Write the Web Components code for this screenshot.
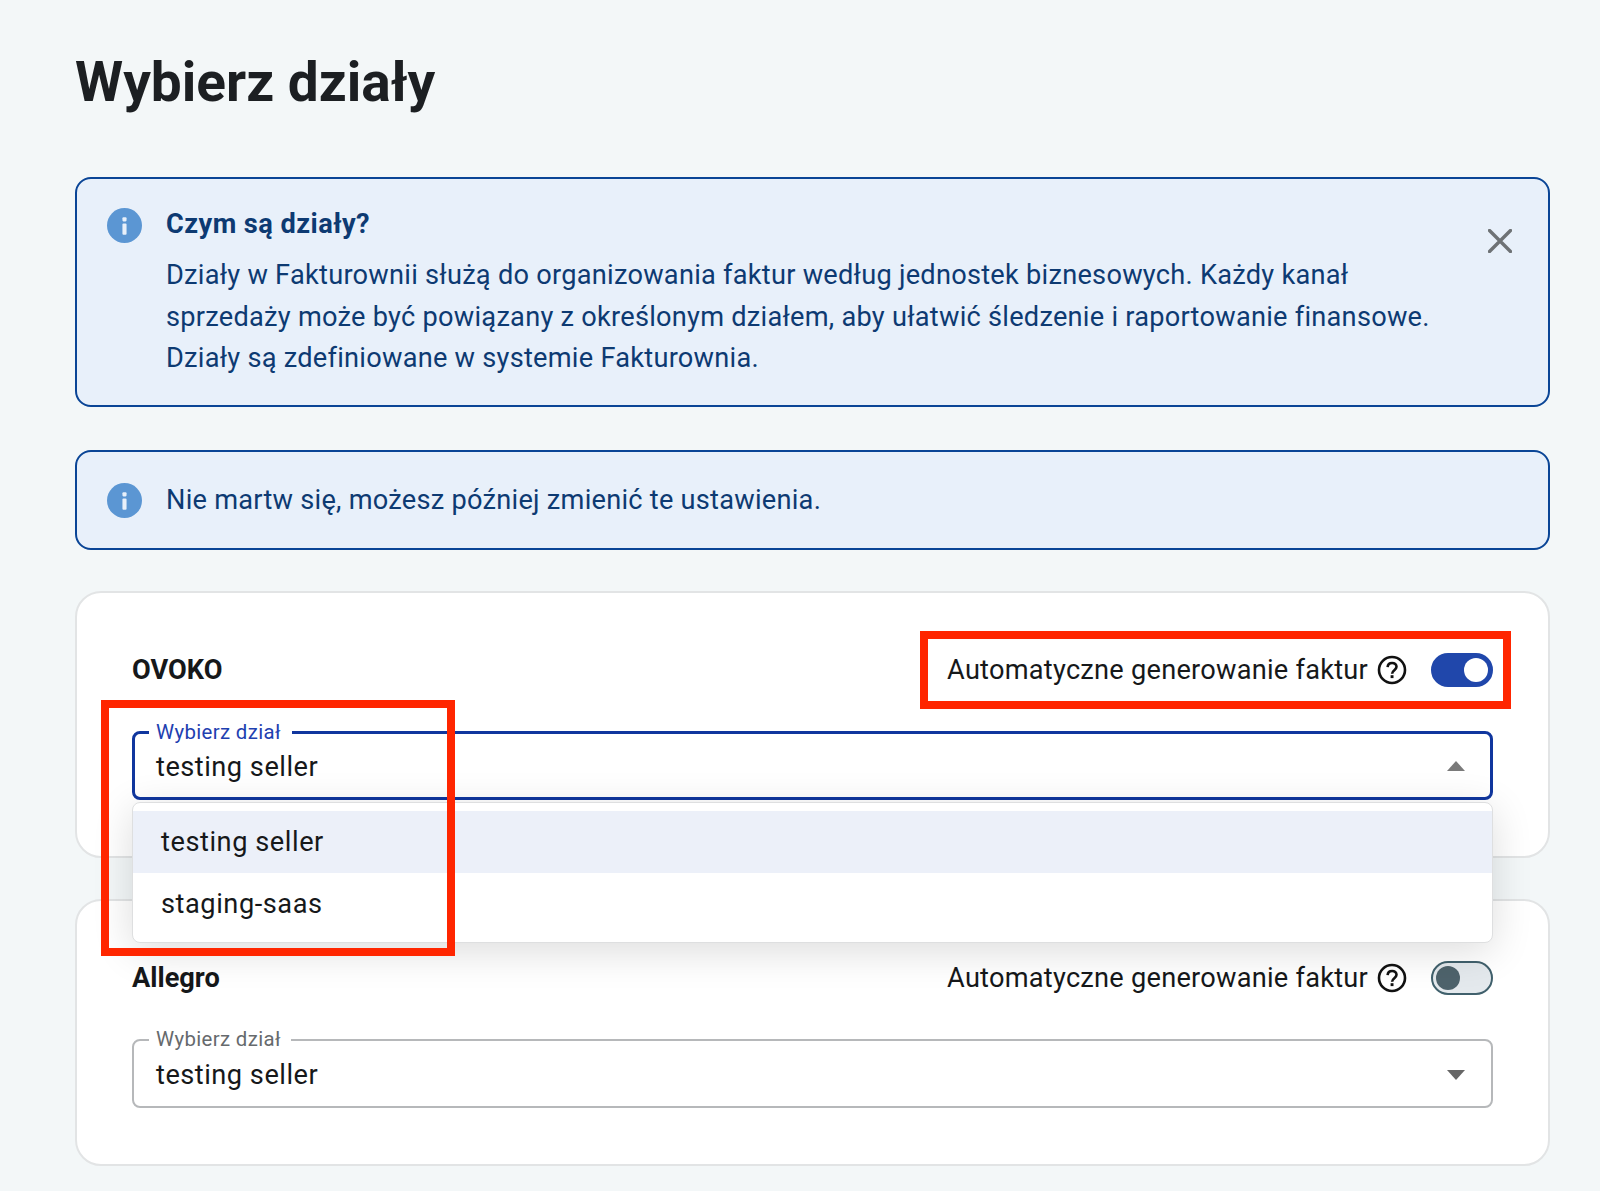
<!DOCTYPE html>
<html lang="pl"><head><meta charset="utf-8"><title>Wybierz działy</title>
<style>
html,body{margin:0;padding:0;background:#f3f7f8;font-family:Roboto,"Liberation Sans",sans-serif;}
</style></head><body>
<app-page>
  <info-alert heading="Czym są działy?" closable>Działy w Fakturownii służą do organizowania faktur według jednostek biznesowych. Każdy kanał<br>sprzedaży może być powiązany z określonym działem, aby ułatwić śledzenie i raportowanie finansowe.<br>Działy są zdefiniowane w systemie Fakturownia.</info-alert>
  <info-alert compact>Nie martw się, możesz później zmienić te ustawienia.</info-alert>
  <channel-card name="OVOKO" on open></channel-card>
  <channel-card name="Allegro"></channel-card>
</app-page>
<script>
function def(name, css, html, init){
  customElements.define(name, class extends HTMLElement{
    connectedCallback(){
      if(this.shadowRoot) return;
      const r=this.attachShadow({mode:'open'});
      r.innerHTML='<style>'+css+'</style>'+(typeof html==='function'?html(this):html);
      if(init) init(this,r);
    }
  });
}
def('app-page',`
:host{display:block;position:relative;box-sizing:border-box;width:1600px;height:1191px;overflow:hidden;padding:0 50px 0 75px;color:#1b1d1f}
h1{margin:0;padding-top:48px;height:177px;box-sizing:border-box;font:700 55px/68px Roboto,sans-serif;color:#1c1f22;letter-spacing:0}
.col{display:flex;flex-direction:column}
::slotted(info-alert){margin-bottom:43px}
::slotted(info-alert[compact]){margin-bottom:41px}
::slotted(channel-card){margin-bottom:41px}
.mark{position:absolute;border:8px solid #ff2600;box-sizing:border-box;pointer-events:none;z-index:5}
.m1{left:920px;top:631px;width:591px;height:78px}
.m2{left:101px;top:700px;width:354px;height:256px}
`,`<h1>Wybierz działy</h1><div class="col"><slot></slot></div><div class="mark m1"></div><div class="mark m2"></div>`);

def('info-icon',`:host{display:block;width:35px;height:35px;flex:none}svg{display:block}`,
`<svg width="35" height="35" viewBox="0 0 34 34"><circle cx="17" cy="17" r="17" fill="#5b96d3"/><rect x="15" y="15" width="4" height="11" rx="1" fill="#e8f0fa"/><rect x="15" y="9" width="4" height="4" rx="1" fill="#e8f0fa"/></svg>`);

def('info-alert',`
:host{display:block;box-sizing:border-box;background:#e8f0fa;border:2px solid #0a4596;border-radius:16px;color:#0d3a72;font:400 27.2px/41.6px Roboto,sans-serif;letter-spacing:.25px;position:relative}
.wrap{display:flex;gap:24px;padding:29px 110px 25px 30px}
:host([compact]) .wrap{padding:28px 30px 27px 30px;align-items:center}
.t{font-weight:700;line-height:32px;margin:0 0 15px;letter-spacing:.45px;color:#0d3a72}
.body{flex:1;white-space:nowrap}
button{position:absolute;right:36.5px;top:50px;width:24px;height:24px;padding:0;border:0;background:none;display:block}
svg{display:block}
`,(h)=>`<div class="wrap"><info-icon></info-icon><div class="body">${h.hasAttribute('heading')?`<div class="t">${h.getAttribute('heading')}</div>`:''}<slot></slot></div>${h.hasAttribute('closable')?`<button aria-label="Zamknij"><svg width="24" height="24" viewBox="0 0 24 24"><path d="M1.5 1.5L22.5 22.5M22.5 1.5L1.5 22.5" stroke="#6e7275" stroke-width="3.4" stroke-linecap="round" fill="none"/></svg></button>`:''}</div>`);

def('toggle-switch',`
:host{display:block;width:62px;height:34px;box-sizing:border-box;border-radius:17px;flex:none;position:relative;background:#e4e9ed;border:2px solid #40606c}
:host([on]){background:#2047ab;border-color:#2047ab}
i{position:absolute;top:3px;left:3px;width:24px;height:24px;border-radius:50%;background:#4e636c}
:host([on]) i{left:auto;right:3px;background:#fff}
`,`<i></i>`);

def('help-icon',`:host{display:block;width:30px;height:30px;flex:none}svg{display:block}`,
`<svg width="30" height="30" viewBox="0 0 30 30" fill="none"><circle cx="15" cy="15" r="13" stroke="#111" stroke-width="2.6"/><path d="M10.6 12.1c.2-2.6 2-4.1 4.5-4.1 2.6 0 4.4 1.6 4.4 3.8 0 3.4-4.4 3.4-4.4 6.9" stroke="#111" stroke-width="2.6"/><rect x="13.6" y="20.2" width="2.9" height="2.9" fill="#111"/></svg>`);

def('select-field',`
:host{display:block;position:relative;height:68px;font:400 27.2px/36px Roboto,sans-serif;color:#16181a}
fieldset{position:absolute;inset:-12px 0 0 0;margin:0;padding:0 0 0 15px;border:2px solid #b6b8ba;border-radius:8px;box-sizing:border-box}
:host([open]) fieldset{border-color:#10369e;border-width:3px;inset:-11.5px 0 0 0;padding-left:14px}
legend{padding:0 10px 0 7px;font:400 20.4px/22px Roboto,sans-serif;color:#666a6d;height:24px;margin-top:0;letter-spacing:.35px}
:host([open]) legend{padding-right:11px;color:#1e40b0}
.v{position:absolute;left:24px;top:17px;letter-spacing:.5px}
.a{position:absolute;right:28px;top:30px;width:0;height:0;border-left:9px solid transparent;border-right:9px solid transparent;border-top:10px solid #666}
:host([open]) .a{top:29px;border-top:0;border-bottom:10px solid #7a7a7a}
.menu{position:absolute;left:0;right:0;top:70px;background:#fff;border:1px solid #dedfe0;border-radius:8px;padding:8px 0 0;height:141px;box-sizing:border-box;box-shadow:0 8px 40px rgba(0,0,0,.14);letter-spacing:.55px;z-index:3}
.o{height:62px;display:flex;align-items:center;padding-left:28px}
.o.s{background:#ecf0f9}
`,(h)=>`<fieldset><legend>Wybierz dział</legend></fieldset><div class="v">testing seller</div><div class="a"></div>${h.hasAttribute('open')?`<div class="menu"><div class="o s">testing seller</div><div class="o">staging-saas</div></div>`:''}`);

def('channel-card',`
:host{display:block;box-sizing:border-box;height:267px;background:#fff;border:2px solid #e2e4e5;border-radius:26px;padding:0 55px;position:relative}
:host([open]){z-index:2}
.row{display:flex;align-items:center;justify-content:space-between;height:70px;margin-top:42px;margin-bottom:27px}
b{font:700 27.2px/34px Roboto,sans-serif;color:#16181a}
.r{display:flex;align-items:center;font:400 27.2px/34px Roboto,sans-serif;letter-spacing:.24px;color:#16181a}
help-icon{margin-left:9px;margin-right:24px}
`,(h)=>`<div class="row"><b>${h.getAttribute('name')}</b><div class="r">Automatyczne generowanie faktur<help-icon></help-icon><toggle-switch ${h.hasAttribute('on')?'on':''}></toggle-switch></div></div><select-field ${h.hasAttribute('open')?'open':''}></select-field>`);
</script>
</body></html>
